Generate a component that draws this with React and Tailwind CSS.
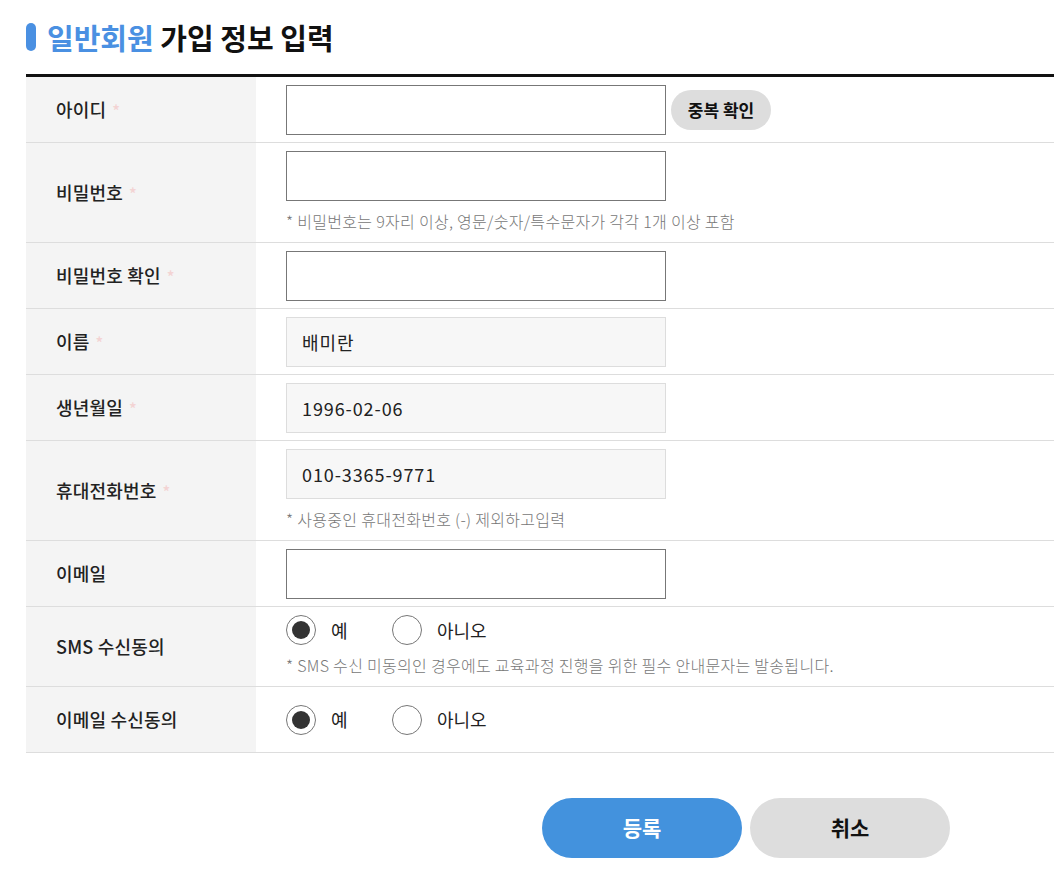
import React from "react";

const FONT = { fontFamily: '"Noto Sans CJK KR", "Noto Sans", sans-serif' };

function Req() {
  return <span className="ml-[6px] text-[#f3d3d3] text-[16px]">*</span>;
}

function Row({ label, required, children, className = "" }) {
  return (
    <div className="flex border-b border-[#dddddd]">
      <div className="w-[230px] shrink-0 bg-[#f4f4f4] flex items-center pl-[30px] text-[18px] font-medium text-[#222] tracking-[0.2px]">
        {label}
        {required && <Req />}
      </div>
      <div className={"flex-1 pl-[30px] " + className}>{children}</div>
    </div>
  );
}

function TextInput({ value, readOnly }) {
  if (readOnly) {
    return (
      <div className="w-[380px] h-[50px] border border-[#dddddd] bg-[#f7f7f7] flex items-center px-[15px] text-[18px] text-[#222] tracking-[0.9px]">
        {value}
      </div>
    );
  }
  return <input className="w-[380px] h-[50px] border border-[#777777] bg-white outline-none px-[15px]" />;
}

function Hint({ children }) {
  return (
    <div className="mt-[10px] leading-[20px] text-[16px] text-[#777] font-light tracking-[0.3px]">
      {children}
    </div>
  );
}

function Radio({ checked, label }) {
  return (
    <label className="w-[106px] flex items-center gap-[15px] text-[18px] text-[#222]">
      <span className="w-[30px] h-[30px] rounded-full border border-[#777] bg-white flex items-center justify-center">
        {checked && <span className="w-[18px] h-[18px] rounded-full bg-[#333]" />}
      </span>
      {label}
    </label>
  );
}

export default function App() {
  return (
    <div className="w-full overflow-hidden bg-white h-[882px]" style={FONT}>
      <div className="w-[1440px] ml-[26px]">
        {/* title */}
        <div className="mt-[23px] flex items-center h-[28px] gap-[11px]">
          <span className="w-[10px] h-[28px] rounded-full bg-[#4a90e2]" />
          <h1 className="text-[29px] leading-[28px] font-bold text-[#111]">
            <span className="text-[#4a90e2]">일반회원</span> 가입 정보 입력
          </h1>
        </div>

        <div className="mt-[23px] border-t-[3px] border-[#111]">
          <Row label="아이디" required className="h-[65px] pt-[8px]">
            <div className="flex items-center gap-[5px]">
              <TextInput />
              <button className="w-[100px] h-[40px] rounded-full bg-[#dddddd] text-[17px] font-bold text-[#111]">
                중복 확인
              </button>
            </div>
          </Row>

          <Row label="비밀번호" required className="pt-[8px] pb-[11px]">
            <TextInput />
            <Hint>* 비밀번호는 9자리 이상, 영문/숫자/특수문자가 각각 1개 이상 포함</Hint>
          </Row>

          <Row label="비밀번호 확인" required className="h-[65px] pt-[8px]">
            <TextInput />
          </Row>

          <Row label="이름" required className="h-[65px] pt-[8px]">
            <TextInput readOnly value="배미란" />
          </Row>

          <Row label="생년월일" required className="h-[65px] pt-[8px]">
            <TextInput readOnly value="1996-02-06" />
          </Row>

          <Row label="휴대전화번호" required className="pt-[8px] pb-[11px]">
            <TextInput readOnly value="010-3365-9771" />
            <Hint>* 사용중인 휴대전화번호 (-) 제외하고입력</Hint>
          </Row>

          <Row label="이메일" className="h-[65px] pt-[8px]">
            <TextInput />
          </Row>

          <Row label="SMS 수신동의" className="pt-[8px] pb-[11px]">
            <div className="flex items-center">
              <Radio checked label="예" />
              <Radio label="아니오" />
            </div>
            <Hint>* SMS 수신 미동의인 경우에도 교육과정 진행을 위한 필수 안내문자는 발송됩니다.</Hint>
          </Row>

          <Row label="이메일 수신동의" className="h-[65px] flex items-center">
            <Radio checked label="예" />
            <Radio label="아니오" />
          </Row>
        </div>

        <div className="mt-[45px] flex justify-center gap-[8px]">
          <button className="w-[200px] h-[60px] rounded-full bg-[#4392dd] text-white text-[21px] font-bold">
            등록
          </button>
          <button className="w-[200px] h-[60px] rounded-full bg-[#dddddd] text-[#111] text-[21px] font-bold">
            취소
          </button>
        </div>
      </div>
    </div>
  );
}
